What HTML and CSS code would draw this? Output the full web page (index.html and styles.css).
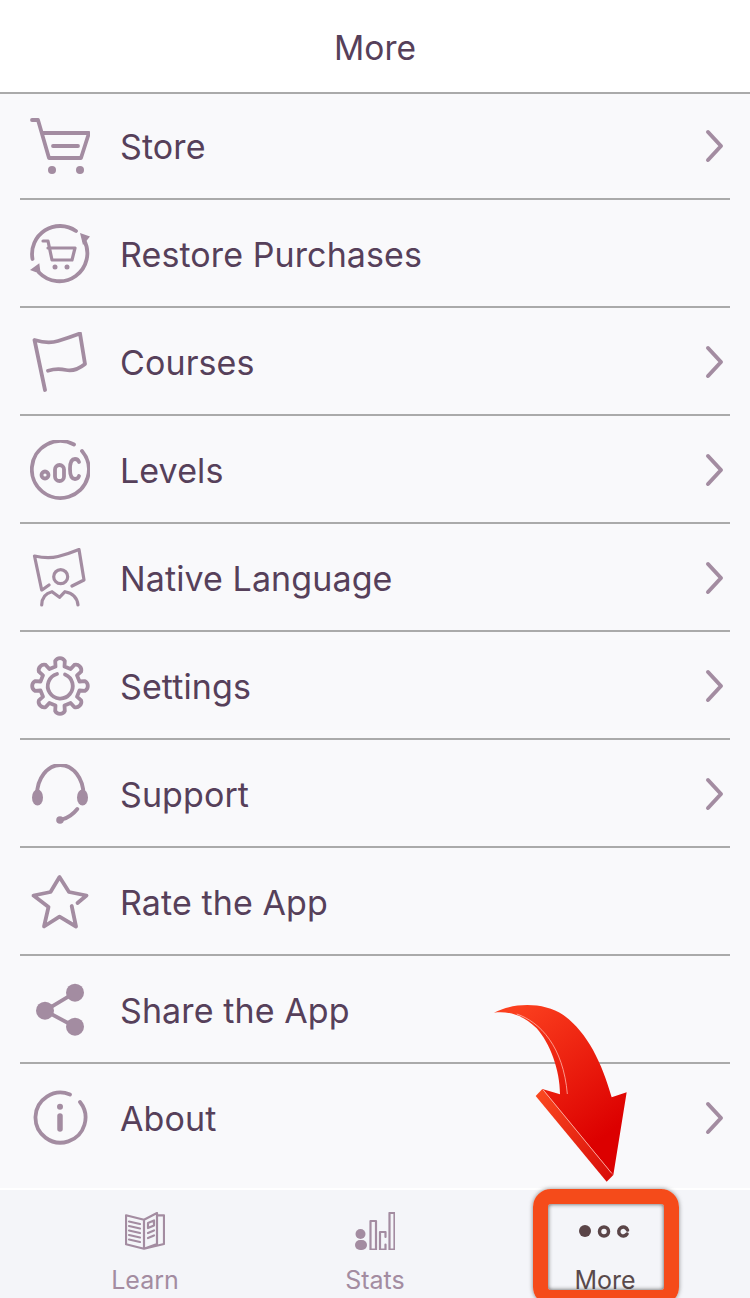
FILE: index.html
```html
<!DOCTYPE html>
<html lang="en">
<head>
    <meta charset="UTF-8">
    <meta name="viewport" content="width=device-width, initial-scale=1.0">
    <title>More</title>
    <link rel="stylesheet" href="styles.css">
</head>
<body>

    <header class="top-bar">More</header>

    <!-- Menu -->
    <main class="menu">
        <div class="menu-row">
            <svg class="menu-icon" viewBox="0 0 60 60"><path d="M2 4h6l11 38h32l8-25H12M23 30h25"/><circle class="solid" cx="22" cy="54" r="4"/><circle class="solid" cx="50" cy="54" r="4"/></svg>
            <span class="menu-label">Store</span>
            <svg class="chevron" viewBox="0 0 20 34"><path d="M4 3L17 17 4 31"/></svg>
        </div>
        <div class="menu-row">
            <svg class="menu-icon" viewBox="0 0 60 60"><path d="M46 7A28 28 0 0 0 2.500 35M54 16A28 28 0 0 1 9 48.500"/><path class="solid" d="M50 9l10 3.500-7 8.500zM0 46l9.300-6.700 1.400 10.700z"/><path class="thin" d="M13 17h5l4 19h20l3-12H18"/><circle class="solid" cx="25" cy="43" r="2.500"/><circle class="solid" cx="37" cy="43" r="2.500"/></svg>
            <span class="menu-label">Restore Purchases</span>
        </div>
        <div class="menu-row">
            <svg class="menu-icon" viewBox="0 0 60 60"><path d="M15 58L4.500 8Q18 12 28 9T50 1.500L55 32Q45 40 36 38T18 38.700"/></svg>
            <span class="menu-label">Courses</span>
            <svg class="chevron" viewBox="0 0 20 34"><path d="M4 3L17 17 4 31"/></svg>
        </div>
        <div class="menu-row">
            <svg class="menu-icon" viewBox="0 0 60 60"><path d="M44 4.500A28.500 28.500 0 1 0 52 11"/><circle cx="15" cy="35" r="3.500"/><rect x="25" y="25" width="9" height="16" rx="4.500"/><path d="M49 22Q48 19 45 19 40 19 40 29 40 39 45 39 48 39 49 36"/></svg>
            <span class="menu-label">Levels</span>
            <svg class="chevron" viewBox="0 0 20 34"><path d="M4 3L17 17 4 31"/></svg>
        </div>
        <div class="menu-row">
            <svg class="menu-icon" viewBox="0 0 60 60"><path class="thin" d="M11.700 42L4.500 8Q18 11 28 8.500T49 1.500L54 32 42 38M19 37l-7 5"/><circle class="thin" cx="30.700" cy="28.700" r="7"/><path class="thin" d="M11.700 57Q12 46 22 43.700L29.500 49.300 35 43.700Q47 46 48 57"/></svg>
            <span class="menu-label">Native Language</span>
            <svg class="chevron" viewBox="0 0 20 34"><path d="M4 3L17 17 4 31"/></svg>
        </div>
        <div class="menu-row">
            <svg class="menu-icon" viewBox="0 0 60 60"><path d="M25.500 10.500L25.200 5A5.500 5.500 0 0 1 34.800 5L34.500 10.500 40.600 13 44.300 8.900A5.500 5.500 0 0 1 51.100 15.700L47 19.400 49.500 25.500 55 25.200A5.500 5.500 0 0 1 55 34.800L49.500 34.500 47 40.600 51.100 44.300A5.500 5.500 0 0 1 44.300 51.100L40.600 47 34.500 49.500 34.800 55A5.500 5.500 0 0 1 25.200 55L25.500 49.500 19.400 47 15.700 51.100A5.500 5.500 0 0 1 8.900 44.300L13 40.600 10.500 34.500 5 34.800A5.500 5.500 0 0 1 5 25.200L10.500 25.500 13 19.400 8.900 15.700A5.500 5.500 0 0 1 15.700 8.900L19.400 13Z"/><path d="M35 18.500A12.500 12.500 0 1 1 27 18"/></svg>
            <span class="menu-label">Settings</span>
            <svg class="chevron" viewBox="0 0 20 34"><path d="M4 3L17 17 4 31"/></svg>
        </div>
        <div class="menu-row">
            <svg class="menu-icon" viewBox="0 0 60 60"><path d="M7 31A23.250 30 0 0 1 53.500 31M47.300 45Q41 53 32 55.500"/><ellipse class="solid" cx="7.500" cy="33.500" rx="5.500" ry="8"/><ellipse class="solid" cx="52.500" cy="33.500" rx="5.500" ry="8"/><circle class="solid" cx="30" cy="56" r="3.800"/></svg>
            <span class="menu-label">Support</span>
            <svg class="chevron" viewBox="0 0 20 34"><path d="M4 3L17 17 4 31"/></svg>
        </div>
        <div class="menu-row">
            <svg class="menu-icon" viewBox="0 0 60 60"><path d="M47.500 31L56.500 23.500 39 20 29.500 5 20.500 20 3.500 23.500 18.500 35 14 54.500 29.500 44.700 46 54.500 41.700 34"/></svg>
            <span class="menu-label">Rate the App</span>
        </div>
        <div class="menu-row">
            <svg class="menu-icon" viewBox="0 0 60 60"><path d="M45 12.700L15 30.700 45 46.700"/><circle class="solid" cx="45" cy="12.700" r="9"/><circle class="solid" cx="15" cy="30.700" r="9"/><circle class="solid" cx="45" cy="46.700" r="9"/></svg>
            <span class="menu-label">Share the App</span>
        </div>
        <div class="menu-row no-line">
            <svg class="menu-icon" viewBox="0 0 60 60"><path d="M40 6.500A25 25 0 1 0 50 14"/><circle class="solid" cx="30" cy="18.700" r="3"/><path class="heavy" d="M30 28v13"/></svg>
            <span class="menu-label">About</span>
            <svg class="chevron" viewBox="0 0 20 34"><path d="M4 3L17 17 4 31"/></svg>
        </div>
    </main>

    <!-- Tab bar -->
    <nav class="tab-bar">
        <div class="tab">
            <svg class="tab-icon" viewBox="0 0 40 38"><path d="M19 7.700L1 3.300V32.300L19 36.700 39 32V3.300H32M19 7.700L32 1V32L19 36.700V7.700Z"/><path d="M4 9.500l11 2.500M4 14l11 2.500M4 18.500l11 2.500M4 23l11 2.500M4 27.500l11 2.500M23 11l6-2.500v5l-6 2.500zM23 21l6-2.500M23 26l6-2.500"/></svg>
            <span class="tab-label">Learn</span>
        </div>
        <div class="tab">
            <svg class="tab-icon" viewBox="0 0 40 38"><circle class="solid" cx="5.500" cy="22" r="5"/><rect class="solid" x="0" y="28" width="12" height="10" rx="5"/><rect x="15.500" y="9" width="5.500" height="28.500"/><path d="M30.500 25v-5h-5.500v17.500h5.500v-5"/><rect x="34.500" y="1" width="5" height="36.500"/></svg>
            <span class="tab-label">Stats</span>
        </div>
        <div class="tab active">
            <svg class="tab-icon dots" viewBox="0 0 60 20"><circle class="solid" cx="10" cy="10" r="6"/><circle cx="29" cy="10.500" r="4.500"/><path d="M52.500 9A4.500 4.500 0 1 0 52 13"/></svg>
            <span class="tab-label">More</span>
        </div>
    </nav>

    <!-- Annotation drawn over the screenshot -->
    <div class="highlight"></div>
    <svg class="arrow" viewBox="0 0 810 924">
        <defs>
            <linearGradient id="arrowFill" x1="0.2" y1="0" x2="0.7" y2="0.85">
                <stop offset="0" stop-color="#fb3f1e"/>
                <stop offset="1" stop-color="#dc0000"/>
            </linearGradient>
            <linearGradient id="arrowSide" x1="0" y1="0" x2="1" y2="1">
                <stop offset="0" stop-color="#fb4a20"/>
                <stop offset="1" stop-color="#d80a08"/>
            </linearGradient>
        </defs>
        <path fill="url(#arrowFill)" d="M42 68C100 38 190 35 250 75 320 125 365 215 395 322L440 307 400 555 187 297 240 313C240 240 210 160 170 115 130 75 85 62 42 68Z"/>
        <path fill="url(#arrowSide)" d="M167 318L187 297 400 555 380 575Z"/>
        <path class="arrow-shine" d="M190 300L395 550"/>
        <path class="arrow-shine" d="M110 72C180 95 250 170 262 312"/>
    </svg>

</body>
</html>
```

FILE: styles.css
```css
/* Page */
html, body {
    height: 100%;
}
body {
    font-family: Inter, "Liberation Sans", sans-serif;
    background-color: #f9f9fb;
    color: #56405a;
    display: flex;
    flex-direction: column;
    height: 1298px;
    margin: 0;
    overflow: hidden;
    position: relative;
}

.top-bar {
    position: relative;
    height: 92px;
    flex-shrink: 0;
    background-color: #ffffff;
    box-shadow: 0 2px 0 #aaaaaa;
    display: flex;
    align-items: center;
    justify-content: center;
    padding-top: 4px;
    box-sizing: border-box;
    font-size: 33.5px;
}

/* Menu */
.menu {
    flex: 1;
}
.menu-row {
    position: relative;
    height: 108px;
    display: flex;
    align-items: center;
    padding: 0 26px 0 30px;
    box-sizing: border-box;
}
.menu-row::after {
    content: "";
    position: absolute;
    left: 20px;
    right: 20px;
    bottom: 0;
    height: 2px;
    background-color: #aaaaaa;
}
.menu-row.no-line::after {
    display: none;
}
.menu-icon {
    width: 60px;
    height: 60px;
    flex-shrink: 0;
    margin-right: 30px;
}
.menu-label {
    font-size: 34px;
    letter-spacing: 0.1px;
}
.chevron {
    width: 20px;
    height: 34px;
    margin-left: auto;
}

/* Shared icon strokes */
.menu-icon *, .chevron *, .tab-icon * {
    fill: none;
    stroke: #a38ca1;
    stroke-width: 3.8;
    stroke-linecap: round;
    stroke-linejoin: round;
}
svg .solid {
    fill: #a38ca1;
    stroke: none;
}
svg .thin {
    stroke-width: 3.2;
}
svg .heavy {
    stroke-width: 5.5;
}
.chevron path {
    stroke-width: 4;
}

/* Tab bar */
.tab-bar {
    height: 110px;
    flex-shrink: 0;
    box-sizing: border-box;
    background-color: #f4f5f9;
    border-top: 2px solid #ffffff;
    padding: 0 30px;
    display: flex;
}
.tab {
    flex: 1;
    display: flex;
    flex-direction: column;
    align-items: center;
    padding-top: 22px;
}
.tab-icon {
    width: 40px;
    height: 38px;
}
.tab-icon * {
    stroke-width: 2.2;
}
.tab-label {
    margin-top: 15px;
    font-size: 25px;
    color: #a38ca1;
}
.tab.active .tab-label {
    color: #5a4a4c;
}
.tab-icon.dots {
    width: 60px;
    height: 20px;
    margin: 9px 0;
}
.dots circle, .dots path {
    stroke: #5a4548;
    stroke-width: 3.5;
}
.dots .solid {
    fill: #5a4548;
    stroke: none;
}

/* Annotation */
.highlight {
    position: absolute;
    left: 533px;
    top: 1189px;
    width: 146px;
    height: 116px;
    box-sizing: border-box;
    border: 15px solid #f54b1a;
    border-radius: 18px;
    box-shadow: 0 0 4px rgba(60, 60, 60, 0.6), inset 0 0 4px rgba(40, 40, 40, 0.8);
}
.arrow {
    position: absolute;
    left: 480px;
    top: 990px;
    width: 270px;
    height: 308px;
}
.arrow .arrow-shine {
    fill: none;
    stroke: rgba(255, 190, 180, 0.75);
    stroke-width: 3;
}
```
